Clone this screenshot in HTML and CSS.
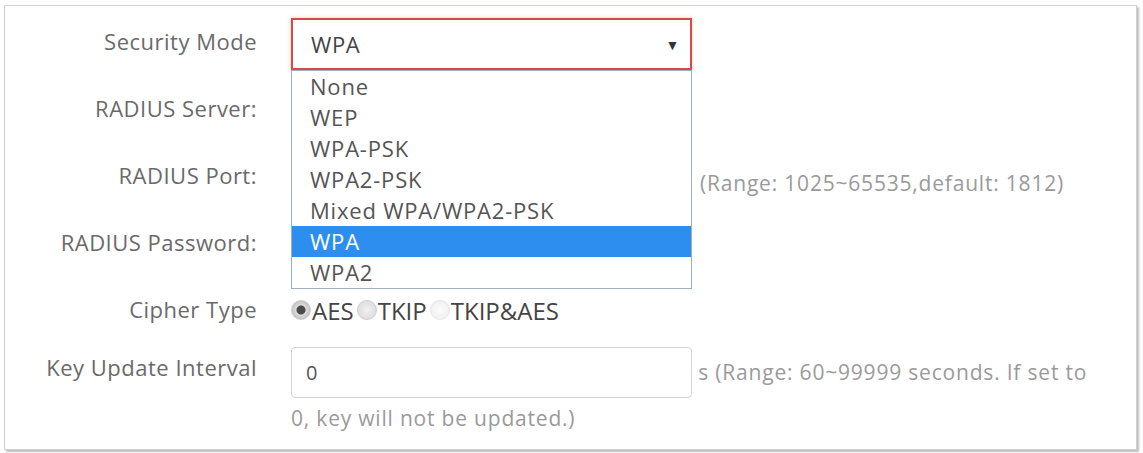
FILE: index.html
```html
<!DOCTYPE html>
<html lang="en">
<head>
  <meta charset="UTF-8" />
  <title>Wireless Security</title>
  <link rel="stylesheet" href="styles.css">
</head>
<body>
  <div class="panel">
    <div class="row row-select">
      <label class="label">Security Mode</label>
      <div class="field">
        <div class="select open">
          <span>WPA</span>
          <span class="arrow">&#9660;</span>
        </div>
        <ul class="options">
          <li>None</li>
          <li>WEP</li>
          <li>WPA-PSK</li>
          <li>WPA2-PSK</li>
          <li>Mixed WPA/WPA2-PSK</li>
          <li class="selected">WPA</li>
          <li>WPA2</li>
        </ul>
      </div>
    </div>

    <div class="row">
      <label class="label">RADIUS Server:</label>
      <div class="field"><input type="text" class="text-input" /></div>
    </div>

    <div class="row">
      <label class="label">RADIUS Port:</label>
      <div class="field">
        <input type="text" class="text-input" value="1812" />
        <span class="hint">(Range: 1025~65535,default: 1812)</span>
      </div>
    </div>

    <div class="row">
      <label class="label">RADIUS Password:</label>
      <div class="field"><input type="password" class="text-input" /></div>
    </div>

    <div class="row row-radio">
      <label class="label">Cipher Type</label>
      <div class="field radios">
        <input type="radio" name="cipher" checked /><span>AES</span>
        <input type="radio" name="cipher" /><span>TKIP</span>
        <input type="radio" name="cipher" class="faint" /><span>TKIP&amp;AES</span>
      </div>
    </div>

    <div class="row row-key">
      <label class="label">Key Update Interval</label>
      <div class="field flow">
        <input type="text" class="text-input" value="0" /><span class="hint"> s (Range: 60~99999 seconds. If set to 0, key will not be updated.)</span>
      </div>
    </div>
  </div>
</body>
</html>
```

FILE: styles.css
```css
* {
  box-sizing: border-box;
}

body {
  margin: 0;
  padding: 5px 6px 3px 4px;
  background: #fff;
  font-family: 'Open Sans', 'Segoe UI', sans-serif;
}

.panel {
  height: 445px;
  border: 1px solid #cfcfcf;
  box-shadow: 2px 2px 2px #bdbdbd;
  padding-top: 12px;
  background: #fff;
}

.row {
  display: flex;
  align-items: flex-start;
  height: 52px;
  margin-bottom: 15px;
}

.label {
  width: 252px;
  flex: none;
  text-align: right;
  font-size: 22px;
  letter-spacing: 0.5px;
  line-height: 46px;
  color: #6a6a6a;
}

.field {
  position: relative;
  margin-left: 34px;
  display: flex;
  align-items: center;
  height: 100%;
}

.select {
  width: 401px;
  height: 52px;
  border: 2px solid #d9474f;
  box-shadow: 0 0 4px rgba(240, 160, 90, 0.5);
  display: flex;
  align-items: center;
  justify-content: space-between;
  padding: 0 10px 0 18px;
  font-size: 22px;
  letter-spacing: 0.6px;
  color: #444;
  background: #fff;
}

.arrow {
  font-size: 14px;
  color: #333;
}

.options {
  position: absolute;
  top: 52px;
  left: 0;
  width: 401px;
  margin: 0;
  padding: 0;
  list-style: none;
  background: #fff;
  border: 1px solid #9fb0c4;
  z-index: 10;
}

.options li {
  height: 31px;
  line-height: 31px;
  padding-left: 18px;
  font-size: 22px;
  letter-spacing: 0.8px;
  color: #555;
}

.options li.selected {
  background: #2e8ef0;
  color: #fff;
}

.text-input {
  width: 401px;
  height: 51px;
  border: 1px solid #d4d4d4;
  border-radius: 4px;
  padding: 0 14px;
  font-family: inherit;
  font-size: 20px;
  color: #555;
  outline: none;
}

.hint {
  margin-left: 8px;
  font-size: 21px;
  letter-spacing: 0.8px;
  color: #9a9a9a;
  padding-top: 10px;
}

.row-radio {
  height: 48px;
  margin-bottom: 13px;
}

.radios {
  margin-left: 33px;
  font-size: 24px;
  color: #444;
}

.radios input {
  appearance: none;
  -webkit-appearance: none;
  flex: none;
  width: 20px;
  height: 20px;
  margin: 0 1px;
  border-radius: 50%;
  border: 1px solid #cdcdcd;
  background: radial-gradient(circle, #f2f2f2, #d6d6d6);
}

.radios input:checked {
  background: radial-gradient(circle, #4a4a4a 0 4px, #dcdcdc 5px, #c4c4c4 9px);
}

.radios input.faint {
  border-color: #e6e6e6;
  background: radial-gradient(circle, #fbfbfb, #eeeeee);
}

.radios span {
  margin-right: 2px;
}

.row-key .label {
  line-height: 40px;
}

.flow {
  display: block;
  width: 810px;
  line-height: 41px;
}

.flow .hint {
  margin-left: 0;
  padding-top: 0;
}
```
